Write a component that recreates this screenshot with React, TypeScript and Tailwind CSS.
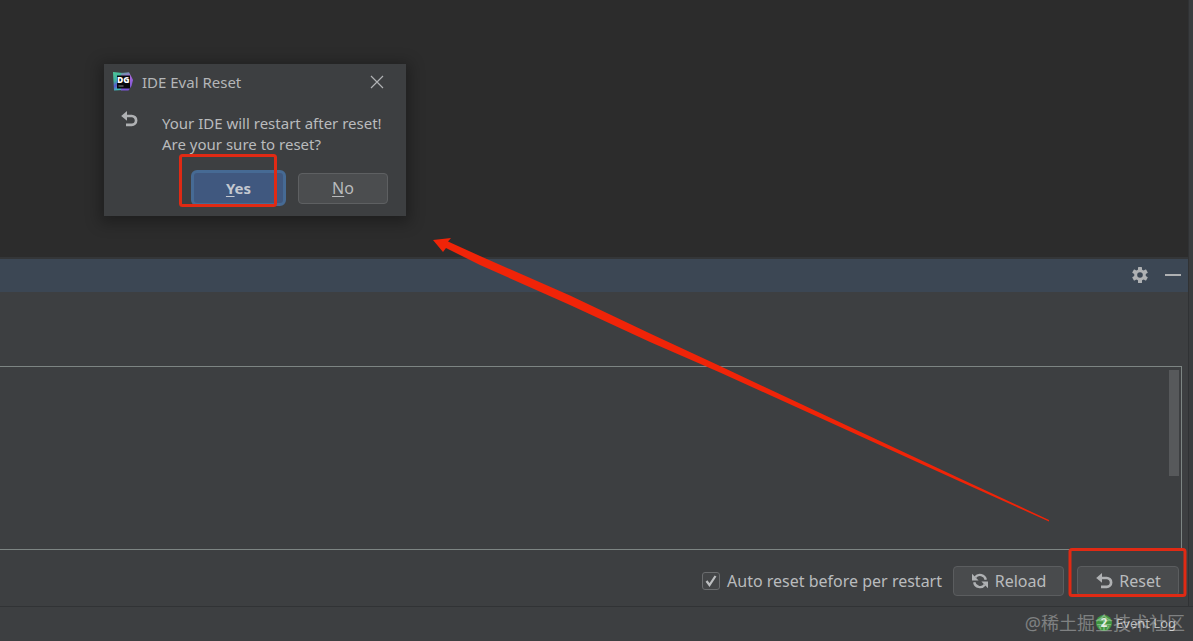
import React, { useState } from 'react';

const font = "font-['Noto_Sans','Noto_Sans_CJK_SC',sans-serif]";

function UndoIcon() {
  return (
    <svg width="18" height="18" viewBox="0 0 18 18" fill="none" aria-hidden="true">
      <path d="M6 6h5.700a4.400 4.400 0 0 1 0 8.800H6" stroke="#afb1b3" strokeWidth="2.7" />
      <path d="M1.200 6 7 1v9.800Z" fill="#afb1b3" />
    </svg>
  );
}

function ReloadIcon() {
  return (
    <svg width="18" height="18" viewBox="0 0 18 18" fill="none" aria-hidden="true">
      <path d="M4.2 5.2a6 6 0 0 1 10.6 2.6M13.8 12.8A6 6 0 0 1 3.2 10.2" stroke="#afb1b3" strokeWidth="2.4" />
      <path d="M1 1.8v6.6h6.6ZM17 16.2V9.6h-6.6Z" fill="#afb1b3" />
    </svg>
  );
}

function GearIcon() {
  return (
    <svg width="16" height="16" viewBox="0 0 16 16" aria-hidden="true">
      <g fill="#afb1b3">
        <rect x="6" y="0" width="4" height="16" rx="0.6" />
        <rect x="6" y="0" width="4" height="16" rx="0.6" transform="rotate(60 8 8)" />
        <rect x="6" y="0" width="4" height="16" rx="0.6" transform="rotate(120 8 8)" />
        <circle cx="8" cy="8" r="5.8" />
      </g>
      <circle cx="8" cy="8" r="2.8" fill="#3c4754" />
    </svg>
  );
}

function DataGripLogo() {
  return (
    <svg width="20" height="20" viewBox="0 0 20 20" aria-hidden="true">
      <defs>
        <linearGradient id="dg-left" x1="0" y1="0" x2="0.3" y2="1">
          <stop offset="0" stopColor="#4fc79a" />
          <stop offset="0.5" stopColor="#3fae9e" />
          <stop offset="0.75" stopColor="#5a55d0" />
          <stop offset="1" stopColor="#3fbcb8" />
        </linearGradient>
        <linearGradient id="dg-right" x1="0" y1="0" x2="0.2" y2="1">
          <stop offset="0" stopColor="#55a995" />
          <stop offset="0.35" stopColor="#a868dc" />
          <stop offset="1" stopColor="#7b55d8" />
        </linearGradient>
      </defs>
      <path d="M0 0 10 1v17L1 18.500Z" fill="url(#dg-left)" />
      <path d="M8 1 16 .3l1.500 2.700L20 8l-1.500 6-3 4.500H8Z" fill="url(#dg-right)" />
      <rect x="4" y="3.500" width="13" height="13" fill="#08080c" />
      <text x="4" y="10.500" fill="#fff" fontSize="8.500" fontWeight="800" fontFamily="Open Sans, sans-serif">DG</text>
      <rect x="5.500" y="13.500" width="5" height="1" fill="#858589" />
    </svg>
  );
}

function ConfirmDialog() {
  return (
    <div
      role="dialog"
      aria-label="IDE Eval Reset"
      className="absolute left-[104px] top-16 w-[302px] bg-[#3d3f41] shadow-[0_3px_14px_4px_rgba(0,0,0,0.3)]"
    >
      <div className="flex h-9 items-center gap-[9px] pl-[9px] pr-[22px]">
        <DataGripLogo />
        <h1 className="flex-1 text-[15px] leading-5 text-[#b4b6b8]">IDE Eval Reset</h1>
        <button aria-label="Close" className="text-[#b0b2b4]">
          <svg width="14" height="14" viewBox="0 0 14 14" fill="none" stroke="currentColor" strokeWidth="1.2">
            <path d="m1 1 12 12M13 1 1 13" />
          </svg>
        </button>
      </div>
      <div className="flex gap-6 px-4 pt-[13px]">
        <div className="-mt-[3px]">
          <UndoIcon />
        </div>
        <p className="whitespace-nowrap text-[15px] leading-[21px] text-[#b9bbbd]">
          Your IDE will restart after reset!
          <br />
          Are your sure to reset?
        </p>
      </div>
      <div className="flex items-center justify-end gap-3 pb-[10px] pr-[18px] pt-[15px]">
        <button className="h-9 w-[95px] rounded-[6px] border-[3px] border-[#466a94] bg-[#40587f] text-[15px] font-bold leading-5 text-[#c3c8d0]">
          <span className="underline underline-offset-2">Y</span>es
        </button>
        <button className="h-[31px] w-[90px] rounded-[4px] border border-[#5e6062] bg-[#4b4d4f] text-[16px] leading-5 text-[#b9bbbd]">
          <span className="underline underline-offset-2">N</span>o
        </button>
      </div>
    </div>
  );
}

function Annotations() {
  return (
    <svg className="pointer-events-none absolute left-0 top-0" width="1193" height="641" viewBox="0 0 1193 641" aria-hidden="true">
      <g fill="none" stroke="#e02a14" strokeWidth="3">
        <rect x="180.500" y="155.500" width="95" height="50" rx="2" />
        <rect x="1070" y="549.500" width="115" height="46" rx="2" />
      </g>
      <path
        d="M433 240 451 238 448 241.500 480 256 570 295.500 650 333.500 720 366 960 478.500 1049 520 1049 521.500 960 481.500 720 372.500 650 342 570 305 480 265 446 248 443 252Z"
        fill="#f02408"
      />
    </svg>
  );
}

export default function App() {
  const [autoReset, setAutoReset] = useState(true);

  return (
    <div className={`relative flex min-h-screen flex-col overflow-hidden bg-[#3d3f41] ${font}`}>
      <div className="flex flex-1">
        <main className="flex flex-1 flex-col border-r border-[#303234]">
          <div className="min-h-[256px] flex-1 bg-[#2c2c2c]" />

          <section className="border-t-2 border-[#343638]">
            <header className="flex h-[33px] items-center justify-end gap-[17px] bg-[#3c4754] pb-[2px] pr-[7px]">
              <button aria-label="Settings">
                <GearIcon />
              </button>
              <button aria-label="Hide" className="flex h-4 w-4 items-center">
                <span className="h-[2px] w-full bg-[#afb1b3]" />
              </button>
            </header>

            <div className="pr-[6px] pt-[74px]">
              <div className="flex h-[184px] justify-end border-y border-r border-[#7d8583] pr-[2px] pt-[3px]">
                <div className="h-[106px] w-[10px] bg-[#57595b]" />
              </div>
            </div>

            <div className="flex h-14 items-center justify-end pr-[9px] pt-[6px]">
              <label className="mr-[11px] flex items-center gap-[7px] text-[16px] leading-5 text-[#b9bbbd]">
                <span className="relative flex">
                  <input
                    type="checkbox"
                    checked={autoReset}
                    onChange={(e) => setAutoReset(e.target.checked)}
                    className="h-[18px] w-[18px] appearance-none rounded-[3px] border border-[#6b6d6f] bg-[#434547]"
                  />
                  {autoReset && (
                    <svg className="pointer-events-none absolute left-0 top-0" width="18" height="18" viewBox="0 0 18 18" fill="none">
                      <path d="m4.500 9 3 4L13.500 4" stroke="#bcbec0" strokeWidth="2.2" />
                    </svg>
                  )}
                </span>
                Auto reset before per restart
              </label>
              <button className="mr-[13px] flex h-[30px] w-[111px] items-center justify-center gap-[6px] rounded-[4px] border border-[#5b5d5f] bg-[#494b4d] text-[16px] leading-5 text-[#b9bbbd]">
                <ReloadIcon />
                Reload
              </button>
              <button className="flex h-[30px] w-[102px] items-center justify-center gap-[6px] rounded-[4px] border border-[#5b5d5f] bg-[#494b4d] text-[16px] leading-5 text-[#b9bbbd]">
                <UndoIcon />
                Reset
              </button>
            </div>
          </section>
        </main>
        <aside className="w-1 bg-[#3a3c3e]" />
      </div>

      <footer className="relative flex h-[35px] items-center justify-end border-t border-[#313335] pb-[2px] pr-[17px]">
        <button className="flex items-center gap-1 text-[13px] leading-5 text-[#b9bbbd]">
          <span className="flex h-4 w-4 items-center justify-center rounded-full bg-[#3f9440] text-[12px] font-bold text-[#dfe9df]">2</span>
          Event Log
        </button>
        <span className="pointer-events-none absolute right-2 top-1 whitespace-nowrap text-[18px] leading-6 text-white/35">@稀土掘金技术社区</span>
      </footer>

      <ConfirmDialog />
      <Annotations />
    </div>
  );
}
